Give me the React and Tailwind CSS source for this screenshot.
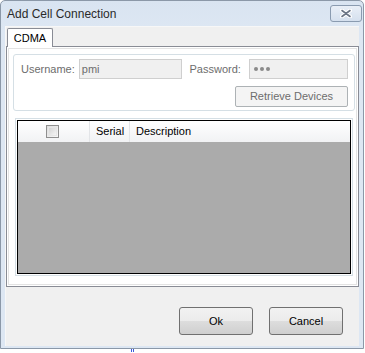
import React from "react";

const font = { fontFamily: '"Liberation Sans", Arial, sans-serif' };

const Button = ({ children, className = "" }) => (
  <div
    className={`flex items-center justify-center rounded-[3px] border border-[#707070] bg-[linear-gradient(#f2f2f2_0%,#ebebeb_50%,#dddddd_51%,#cfcfcf_100%)] text-[11px] text-black ${className}`}
  >
    {children}
  </div>
);

const App = () => {
  return (
    <div className="relative h-[353px] w-[365px] overflow-hidden bg-white" style={font}>
      <div className="flex h-[349px] w-[364px] flex-col rounded-t-[5px] border border-[#8b98a8] bg-[linear-gradient(#d9e4f1,#dde7f3_30px,#dde7f3)]">
        {/* title bar */}
        <div className="flex h-[25px] items-start justify-between">
          <span className="mt-[6px] pl-[6px] text-[12px] leading-[14px] text-[#2a2a2a]">Add Cell Connection</span>
          <div className="mr-[1px] mt-[4px] flex h-[17px] w-[32px] items-center justify-center rounded-[3px] border border-[#8a9bb0] bg-[linear-gradient(#e9eff7,#d5e0ee)]">
            <svg width="12" height="9" viewBox="0 0 12 9">
              <path d="M2 1.5 L10 7.5 M10 1.5 L2 7.5" stroke="#ffffff" strokeWidth="4" strokeLinecap="round" />
              <path d="M2 1.5 L10 7.5 M10 1.5 L2 7.5" stroke="#6b7585" strokeWidth="1.6" strokeLinecap="round" />
            </svg>
          </div>
        </div>

        {/* client area */}
        <div className="mx-[4px] mb-[2px] flex flex-1 flex-col border-l border-t border-[#f7f7f7] bg-[#f0f0f0]">
          {/* tab strip */}
          <div className="flex h-[19px] pl-[1px] pt-[1px]">
            <div className="relative z-10 flex h-[19px] w-[46px] items-center justify-center rounded-t-[2px] border border-b-0 border-[#898c95] bg-white text-[11px] text-black">
              CDMA
            </div>
          </div>
          {/* tab panel */}
          <div className="h-[241px] w-[353px] border border-[#898c95] bg-white p-[1px]">
            <div className="flex h-full flex-col border border-[#e3e3e3] pl-[4px] pr-[1px] pt-[5px]">
              {/* group box */}
              <div className="h-[57px] rounded-[3px] border border-[#d5dfe5] pl-[7px] pr-[6px] pt-[4px] text-[11px] text-[#6d6d6d]">
                <div className="flex items-center">
                  <span className="w-[58px]">Username:</span>
                  <div className="flex h-[20px] w-[103px] items-center border border-[#cfcfcf] bg-[#f0f0f0] pl-[2px]">pmi</div>
                  <span className="ml-[8px] w-[60px]">Password:</span>
                  <div className="flex h-[20px] w-[99px] items-center gap-[2px] border border-[#cfcfcf] bg-[#f0f0f0] pl-[4px]">
                    <span className="h-[4px] w-[4px] rounded-full bg-[#8a8a8a]" />
                    <span className="h-[4px] w-[4px] rounded-full bg-[#8a8a8a]" />
                    <span className="h-[4px] w-[4px] rounded-full bg-[#8a8a8a]" />
                  </div>
                </div>
                <div className="mt-[7px] flex justify-end">
                  <div className="flex h-[21px] w-[113px] items-center justify-center rounded-[2px] border border-[#adb2b5] bg-[#f4f4f4]">
                    Retrieve Devices
                  </div>
                </div>
              </div>

              {/* grid */}
              <div className="ml-[2px] mt-[7px] h-[158px] w-[338px] border border-[#d5dfe5] p-[1px]">
                <div className="flex h-full flex-col border border-black bg-[#ababab]">
                  <div className="flex h-[21px] bg-[linear-gradient(#ffffff,#f1f2f4)] text-[11px] text-black">
                    <div className="flex w-[72px] items-center justify-center border-r border-[#e3e5e8] pr-[2px]">
                      <div className="h-[13px] w-[13px] border border-[#8f8f8f] bg-[linear-gradient(135deg,#dcdcdc,#f8f8f8)] p-[1px]">
                        <div className="h-full w-full border border-[#e6e6e6] bg-[linear-gradient(135deg,#d4d4d4,#f4f4f4)]" />
                      </div>
                    </div>
                    <div className="flex w-[40px] items-center border-r border-[#e3e5e8] pl-[6px]">Serial</div>
                    <div className="flex flex-1 items-center pl-[6px]">Description</div>
                  </div>
                </div>
              </div>
            </div>
          </div>

          {/* buttons */}
          <div className="mt-[20px] flex gap-[16px] pl-[173px]">
            <Button className="h-[28px] w-[74px]">Ok</Button>
            <Button className="h-[28px] w-[74px]">Cancel</Button>
          </div>
        </div>
      </div>
      <div className="absolute bottom-[1px] left-[131px] h-[3px] w-[3px] border-x border-[#3b5bdb]" />
    </div>
  );
};

export default App;
